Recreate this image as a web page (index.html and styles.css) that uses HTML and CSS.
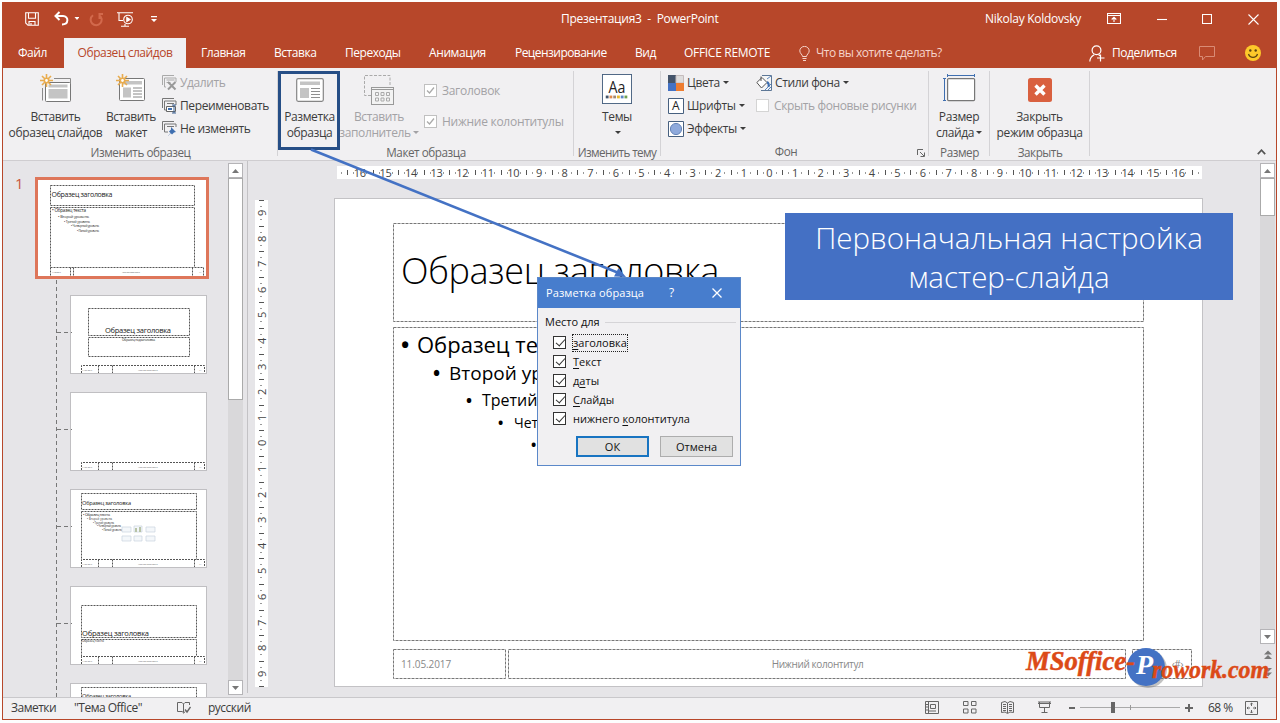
FILE: index.html
```html
<!DOCTYPE html>
<html lang="ru">
<head>
<meta charset="utf-8">
<title>Презентация3 - PowerPoint</title>
<link rel="stylesheet" href="styles.css">
</head>
<body>
<div class="window">
  <header class="top">
    <div class="titlebar">
      <div class="qat">
        <svg width="14" height="14" viewBox="0 0 14 14" class="ln w"><path d="M.7.7h12.6v12.6H3L.7 11zM3.5.7v5.5h7V.7M4 13.300V9.500h6v3.800M6 11v2"/></svg>
        <svg width="25" height="16" viewBox="0 0 25 16"><path d="M5.500 1 1.500 5l4 4M2 5h7c6 0 6 8.500-1 8.500" fill="none" stroke="#fff" stroke-width="2"/><path d="M20.500 6h5l-2.500 3z" fill="#fff"/></svg>
        <svg width="14" height="15" viewBox="0 0 14 15" class="redo"><path d="M4 3.200a5.500 5.500 0 1 0 6-.2M10.500 7V2H14" fill="none" stroke="#d2694c" stroke-width="2"/></svg>
        <svg width="17" height="15" viewBox="0 0 17 15" class="ln w show"><path d="M0 .8h16M2 1v7.500h4M8 12v2.300M4 14.300h8"/><circle cx="11" cy="7.500" r="4.300"/><path d="m9.800 5.500 3.200 2-3.200 2z" fill="#fff"/></svg>
        <svg width="6" height="7" viewBox="0 0 6 7" class="more"><path d="M0 0h6v1.300H0zM0 3h6L3 6z" fill="#fff"/></svg>
      </div>
      <div class="doc-title">Презентация3&nbsp; -&nbsp; PowerPoint</div>
      <div class="user">Nikolay Koldovsky</div>
      <div class="winbtns">
        <svg width="14" height="12" viewBox="0 0 14 12" class="ln w"><path d="M.5.5h13v10H.5zM.5 2.500h13M7 9V4.500M4.700 6.500 7 4.300l2.300 2.200"/></svg>
        <svg width="10" height="12" viewBox="0 0 10 12" class="ln w"><path d="M0 6.500h10"/></svg>
        <svg width="10" height="10" viewBox="0 0 10 10" class="ln w"><path d="M.5.5h9v9h-9z"/></svg>
        <svg width="11" height="11" viewBox="0 0 11 11" class="ln w"><path d="m.5.5 10 10M10.500.5l-10 10"/></svg>
      </div>
    </div>
    <nav class="tabs">
      <span class="tab file">Файл</span>
      <span class="tab active">Образец слайдов</span>
      <span class="tab t1">Главная</span>
      <span class="tab t2">Вставка</span>
      <span class="tab t3">Переходы</span>
      <span class="tab t4">Анимация</span>
      <span class="tab t5">Рецензирование</span>
      <span class="tab t6">Вид</span>
      <span class="tab t7">OFFICE REMOTE</span>
      <svg class="bulb" width="11" height="15" viewBox="0 0 11 15" fill="none" stroke="#f6d5cb"><path d="M3.500 10.500C3.500 8.500.8 7.500.8 4.900a4.600 4.400 0 0 1 9.400 0c0 2.600-2.700 3.600-2.700 5.600zM3.500 12.500h4M4 14.500h3"/></svg>
      <span class="tab tell">Что вы хотите сделать?</span>
      <svg class="person" width="16" height="17" viewBox="0 0 16 17" fill="none" stroke="#fff" stroke-width="1.200"><circle cx="7.500" cy="5.300" r="4.400"/><path d="M.8 16.500c.2-3.500 2-5.500 4.400-6.800M9.500 9.500l1.500 1.200M11.500 9.500v7M8 13h7.500"/></svg>
      <span class="tab share">Поделиться</span>
      <svg class="comment" width="16" height="15" viewBox="0 0 16 15" fill="none" stroke="#d98b75"><path d="M.5.5h15v10H6.500l-3 3.500v-3.500h-3z"/></svg>
      <svg class="smile" width="16" height="16" viewBox="0 0 16 16"><circle cx="8" cy="8" r="8" fill="#fdc92a"/><circle cx="5.300" cy="5.500" r="1.200" fill="#5b4310"/><circle cx="10.700" cy="5.500" r="1.200" fill="#5b4310"/><path d="M3.500 9c1.500 4.500 7.500 4.500 9 0" fill="none" stroke="#5b4310" stroke-width="1.300"/></svg>
    </nav>
  </header>

  <section class="ribbon">
    <div class="group g1">
      <div class="items">
        <div class="big b1">
          <svg width="32" height="30" viewBox="0 0 32 30"><path d="M14 4.500h16.500v17M2.500 14v12.500" fill="none" stroke="#8a8a8a"/><rect x="5.500" y="8.500" width="25" height="19" rx="1" fill="#fff" stroke="#777"/><rect x="8.500" y="10.500" width="19" height="3" fill="#c4c4c4"/><rect x="8.500" y="15" width="19" height="9.500" fill="#c4c4c4"/><g class="spark"><path d="M6.500 0v13M0 6.500h13M2 2l9 9M11 2l-9 9"/><circle cx="6.500" cy="6.500" r="2.200"/></g></svg>
          <span>Вставить<br>образец слайдов</span>
        </div>
        <div class="big b2">
          <svg width="30" height="30" viewBox="0 0 30 30"><rect x="3.500" y="4.500" width="25" height="22" rx="1" fill="#fff" stroke="#777"/><path d="M7 7h19v3.500H7zM7 13.500h8v10H7z" fill="#c4c4c4"/><path d="M17 14h9M17 17h9M17 20h9M17 23h9" stroke="#888"/><g class="spark"><path d="M6.500 0v13M0 6.500h13M2 2l9 9M11 2l-9 9"/><circle cx="6.500" cy="6.500" r="2.200"/></g></svg>
          <span>Вставить<br>макет</span>
        </div>
        <div class="rows r1">
          <div class="row off"><svg width="15" height="16" viewBox="0 0 15 16"><path d="M.5 10V.5h11.500M4 12H2.500V3H14v4M4.500 5h8M4.500 7.500h4" fill="none" stroke="#aaa"/><path d="m6 7 7.500 7.500M13.500 7 6 14.500" stroke="#999" stroke-width="2"/></svg><span>Удалить</span></div>
          <div class="row"><svg width="15" height="16" viewBox="0 0 15 16"><path d="M.5 10V.5h11.500M4 12H2.500V3H14v4M5 5.500h7" fill="none" stroke="#777"/><path d="M4.500 8.500h9v5h-9z" fill="#fff" stroke="#666"/><path d="M6 10h4v2H6z" fill="#3f6fb0"/><path d="M10 7h4M10 15h4M12 7v8" stroke="#3d6191"/></svg><span>Переименовать</span></div>
          <div class="row"><svg width="15" height="16" viewBox="0 0 15 16"><path d="M.5 9V.5h11.500M6 11H2.500V3H14v3M5 5.500h7" fill="none" stroke="#777"/><path d="m9 6 5 5-2 .5-2 2-1.200-1.200L6 15l2.500-3-1.500-1.500 2-2z" fill="#3f6fb0"/></svg><span>Не изменять</span></div>
        </div>
      </div>
      <div class="label">Изменить образец</div>
    </div>
    <div class="group g2">
      <div class="items">
        <div class="big b3">
          <svg width="28" height="30" viewBox="0 0 28 30"><rect x=".7" y="4.700" width="26.600" height="22.600" rx="1.500" fill="#fff" stroke="#858585" stroke-width="1.200"/><path d="M4 7.500h20v3.500H4zM4 14h9v10H4z" fill="#c4c4c4"/><path d="M15 14.500h9M15 17.500h9M15 20.500h9M15 23.500h9" stroke="#909090"/></svg>
          <span>Разметка<br>образца</span>
        </div>
        <div class="big b4 off">
          <svg width="32" height="30" viewBox="0 0 32 30" fill="none" stroke="#aaa"><path d="M27 11V1.500H1.500v20H8" stroke-dasharray="3 1.500"/><rect x="8.500" y="13.500" width="22" height="17" fill="#f3f3f3" stroke="#999"/><path d="M9 15.500h21" stroke="#999"/><path d="M12.500 18.500h3v3h-3zM18 18.500h3v3h-3zM23.500 18.500h3v3h-3zM12.500 24h3v3h-3zM18 24h3v3h-3zM23.500 24h3v3h-3z"/></svg>
          <span>Вставить<br>заполнитель<i class="dd"></i></span>
        </div>
        <div class="checks off">
          <div class="row"><svg class="cb" width="13" height="13" viewBox="0 0 13 13"><rect x=".5" y=".5" width="12" height="12" fill="#fff" stroke="#c0c0c0"/><path d="m3 6.500 2.500 2.500L10 3.500" fill="none" stroke="#aaa" stroke-width="1.300"/></svg><span>Заголовок</span></div>
          <div class="row"><svg class="cb" width="13" height="13" viewBox="0 0 13 13"><rect x=".5" y=".5" width="12" height="12" fill="#fff" stroke="#c0c0c0"/><path d="m3 6.500 2.500 2.500L10 3.500" fill="none" stroke="#aaa" stroke-width="1.300"/></svg><span>Нижние колонтитулы</span></div>
        </div>
      </div>
      <div class="label">Макет образца</div>
    </div>
    <div class="group g3">
      <div class="items">
        <div class="big b5">
          <svg width="32" height="32" viewBox="0 0 32 32"><rect x=".5" y=".5" width="31" height="31" fill="#fff" stroke="#47607f"/><text x="7" y="20" font-size="17" textLength="18" lengthAdjust="spacingAndGlyphs" fill="#222">Aa</text><path d="M4 23h3v3H4z" fill="#44546a"/><path d="M8 23h3v3H8z" fill="#e08a4c"/><path d="M12 23h3v3h-3z" fill="#a08a78"/><path d="M16 23h3v3h-3z" fill="#e8b92c"/><path d="M20 23h3v3h-3z" fill="#5b86c4"/><path d="M24 23h3v3h-3z" fill="#70a050"/></svg>
          <span>Темы<br><i class="dd"></i></span>
        </div>
      </div>
      <div class="label tight">Изменить тему</div>
    </div>
    <div class="group g4">
      <div class="items">
        <div class="rows r2">
          <div class="row"><svg width="16" height="16" viewBox="0 0 16 16"><path d="M0 0h8v8H0z" fill="#44546a"/><path d="M8 .5h7.500V8H8z" fill="#ddd" stroke="#c5bcbc"/><path d="M0 8h8v8H0z" fill="#4472c4"/><path d="M8 8h8v8H8z" fill="#ed7d31"/></svg><span>Цвета</span><i class="dd"></i></div>
          <div class="row"><svg width="16" height="16" viewBox="0 0 16 16"><path d="M.5.5h15v15H.5z" fill="#fff" stroke="#47607f"/><text x="4" y="12.200" font-size="12" fill="#222">A</text></svg><span>Шрифты</span><i class="dd"></i></div>
          <div class="row"><svg width="16" height="16" viewBox="0 0 16 16"><path d="M.5.5h15v15H.5z" fill="#fff" stroke="#47607f"/><circle cx="8" cy="8" r="5.600" fill="#8faadc" stroke="#6685b8"/></svg><span>Эффекты</span><i class="dd"></i></div>
        </div>
        <div class="rows r3">
          <div class="row"><svg width="16" height="16" viewBox="0 0 16 16"><path d="M6 .5h9.500v15H5" fill="#f6f6f6" stroke="#5d7796"/><path d="m9 15 6-6M12 15l3-3M11 4l4-3" stroke="#5b86bd"/><path d="M.8 7.500 6 2.500l5 5-5.500 5.500z" fill="#fff" stroke="#555"/><path d="M5 6V1.500" stroke="#555"/><path d="M11 7c2 1 2 3 1.500 5" fill="none" stroke="#3f6fb0" stroke-width="2"/></svg><span>Стили фона</span><i class="dd"></i></div>
          <div class="row off"><svg class="cb" width="13" height="13" viewBox="0 0 13 13"><rect x=".5" y=".5" width="12" height="12" fill="#fff" stroke="#d4d4d4"/></svg><span>Скрыть фоновые рисунки</span></div>
        </div>
      </div>
      <div class="label l4"><span>Фон</span><svg class="launch" width="8" height="8" viewBox="0 0 8 8" fill="none" stroke="#666"><path d="M.5 6V.5H6M3 3l4 4M7.500 3.500v4h-4"/></svg></div>
    </div>
    <div class="group g5">
      <div class="items">
        <div class="big b6">
          <svg width="32" height="30" viewBox="0 0 32 30"><path d="M4 1.500h28M4.500 0v3M31.500 0v3M1.500 4v23M0 4.500h3M0 26.500h3" stroke="#3f6fb0" fill="none"/><rect x="4.600" y="4.600" width="27" height="22" rx="1" fill="#fff" stroke="#777" stroke-width="1.200"/></svg>
          <span>Размер<br>слайда<i class="dd"></i></span>
        </div>
      </div>
      <div class="label">Размер</div>
    </div>
    <div class="group g6">
      <div class="items">
        <div class="big b7">
          <svg width="24" height="30" viewBox="0 0 24 30"><rect y="4" width="24" height="24" rx="2.500" fill="#d9603f"/><path d="m7.500 11.500 9 9M16.500 11.500l-9 9" stroke="#fff" stroke-width="3.400"/></svg>
          <span>Закрыть<br>режим образца</span>
        </div>
      </div>
      <div class="label">Закрыть</div>
    </div>
    <svg class="collapse" width="9" height="6" viewBox="0 0 9 6"><path d="m.8 5.200 3.700-4 3.700 4" fill="none" stroke="#555" stroke-width="1.700"/></svg>
  </section>

  <main class="work">
    <aside class="thumbs">
      <div class="num">1</div>
      <svg class="tree" width="16" height="418" viewBox="0 0 16 418"><path d="M.5 0v418M1 52.500h15M1 149.500h15M1 246.500h15M1 343.500h15" fill="none" stroke="#777" stroke-width="1" stroke-dasharray="4 3"/></svg>
      <div class="stack">
        <div class="thumb master">
          <svg width="168" height="96" viewBox="0 0 168 96">
            <g class="ph"><path d="M12.500 5.500h144v20h-144zM12.500 27.500h144v60M12.500 27.500v60M12.500 87.500h153v9M12.500 87.500v9M32.500 87.500v9M35.500 87.500v9M154.500 87.500v9"/></g>
            <text x="13.500" y="17" font-size="7" textLength="61">Образец заголовка</text>
            <text x="14" y="31.500" font-size="4.600" textLength="34">• Образец текста</text>
            <text x="20" y="37.500" font-size="3.900" textLength="31">• Второй уровень</text>
            <text x="26" y="43" font-size="3.300" textLength="26">• Третий уровень</text>
            <text x="33" y="47.300" font-size="3" textLength="28">• Четвертый уровень</text>
            <text x="39" y="52" font-size="3" textLength="22">• Пятый уровень</text>
            <g class="tiny"><text x="14" y="92.500" textLength="9">11.05.2017</text><text x="84" y="92.500" textLength="18">Нижний колонтитул</text><text x="161" y="92.500">‹#›</text></g>
          </svg>
        </div>
        <div class="thumb">
          <svg width="135" height="77" viewBox="0 0 135 77">
            <g class="ph"><path d="M17.500 12.500h101v27h-101zM17.500 41.500h101v19h-101z"/><path d="M10.500 77v-7.500h123V77M27.500 69.500V77M41.500 69.500V77M123.500 69.500V77"/></g>
            <text x="34" y="37" font-size="7.500" textLength="66">Образец заголовка</text>
            <text x="51" y="44.500" font-size="3.300" textLength="33">Образец подзаголовка</text>
            <g class="tiny"><text x="11" y="74.500">11.05.2017</text><text x="67" y="74.500">Нижний колонтитул</text><text x="128" y="74.500">‹#›</text></g>
          </svg>
        </div>
        <div class="thumb">
          <svg width="135" height="77" viewBox="0 0 135 77">
            <g class="ph"><path d="M10.500 77v-7.500h123V77M27.500 69.500V77M41.500 69.500V77M123.500 69.500V77"/></g>
            <g class="tiny"><text x="11" y="74.500">11.05.2017</text><text x="67" y="74.500">Нижний колонтитул</text><text x="128" y="74.500">‹#›</text></g>
          </svg>
        </div>
        <div class="thumb">
          <svg width="135" height="77" viewBox="0 0 135 77">
            <g class="ph"><path d="M10.500 3.500h115v16h-115zM10.500 21.500h115v48M10.500 21.500v48"/><path d="M10.500 77v-7.500h123V77M27.500 69.500V77M41.500 69.500V77M123.500 69.500V77"/></g>
            <text x="11" y="14.500" font-size="5.600" textLength="49">Образец заголовка</text>
            <text x="12" y="25.700" font-size="3.800" textLength="27">• Образец текста</text>
            <text x="16" y="30.300" font-size="2.600" textLength="25">• Второй уровень</text>
            <text x="22" y="33.800" font-size="2.600" textLength="21">• Третий уровень</text>
            <text x="26" y="37.300" font-size="2.600" textLength="24">• Четвертый уровень</text>
            <text x="31" y="40.800" font-size="2.600" textLength="20">• Пятый уровень</text>
            <g fill="#f4f7fa" stroke="#c9d3de" stroke-width=".7"><path d="M51 37h9v5h-9zM63 36h8v6h-8zM75 37h9v5h-9zM51 46h9v5h-9zM63 46h8v5h-8zM75 46h9v5h-9z"/></g>
            <path d="M64 38h2v4h-2zM68 37h2v5h-2z" fill="#b7c3a6"/>
            <g class="tiny"><text x="11" y="74.500">11.05.2017</text><text x="67" y="74.500">Нижний колонтитул</text><text x="128" y="74.500">‹#›</text></g>
          </svg>
        </div>
        <div class="thumb">
          <svg width="135" height="77" viewBox="0 0 135 77">
            <g class="ph"><path d="M10.500 18.500h115v32h-115zM10.500 52.500h115v17M10.500 52.500v17"/><path d="M10.500 77v-7.500h123V77M27.500 69.500V77M41.500 69.500V77M123.500 69.500V77"/></g>
            <text x="11" y="49" font-size="7.500" textLength="67">Образец заголовка</text>
            <text x="11" y="55.300" font-size="3" textLength="22">Образец текста</text>
            <g class="tiny"><text x="11" y="74.500">11.05.2017</text><text x="67" y="74.500">Нижний колонтитул</text><text x="128" y="74.500">‹#›</text></g>
          </svg>
        </div>
        <div class="thumb">
          <svg width="135" height="77" viewBox="0 0 135 77">
            <g class="ph"><path d="M10.500 3.500h115v16h-115z"/></g>
            <text x="11" y="14" font-size="5.600" textLength="49">Образец заголовка</text>
          </svg>
        </div>
      </div>
    </aside>
    <div class="scroll left-scroll">
      <div class="sbtn"><svg width="7" height="4" viewBox="0 0 7 4"><path d="M0 4h7L3.500 0z" fill="#777"/></svg></div>
      <div class="handle"></div>
      <div class="track"></div>
      <div class="sbtn"><svg width="7" height="4" viewBox="0 0 7 4"><path d="M0 0h7L3.500 4z" fill="#777"/></svg></div>
    </div>
    <div class="vruler-col">
      <div class="vruler"><span>9</span><span>8</span><span>7</span><span>6</span><span>5</span><span>4</span><span>3</span><span>2</span><span>1</span><span>0</span><span>1</span><span>2</span><span>3</span><span>4</span><span>5</span><span>6</span><span>7</span><span>8</span><span>9</span></div>
    </div>
    <div class="editor">
      <div class="hruler"><span>16</span><span>15</span><span>14</span><span>13</span><span>12</span><span>11</span><span>10</span><span>9</span><span>8</span><span>7</span><span>6</span><span>5</span><span>4</span><span>3</span><span>2</span><span>1</span><span>0</span><span>1</span><span>2</span><span>3</span><span>4</span><span>5</span><span>6</span><span>7</span><span>8</span><span>9</span><span>10</span><span>11</span><span>12</span><span>13</span><span>14</span><span>15</span><span>16</span></div>
      <div class="slide">
        <svg class="frames" width="867" height="488" viewBox="0 0 867 488"><path d="M58.500 24.500h750v98h-750zM58.500 128.500h750v313h-750zM58.500 450.500h112v29h-112zM173.500 450.500h617v29h-617zM797.500 450.500h59v29h-59z"/></svg>
        <div class="slide-title">Образец заголовка</div>
        <ul class="levels">
          <li class="v1"><b>•</b><span>Образец текста</span></li>
          <li class="v2"><b>•</b><span>Второй уровень</span></li>
          <li class="v3"><b>•</b><span>Третий уровень</span></li>
          <li class="v4"><b>•</b><span>Четвертый уровень</span></li>
          <li class="v5"><b>•</b><span>Пятый уровень</span></li>
        </ul>
        <div class="foot"><span class="date">11.05.2017</span><span class="mid">Нижний колонтитул</span><span class="no">‹#›</span></div>
      </div>
    </div>
    <div class="scroll right-scroll">
      <div class="sbtn"><svg width="7" height="4" viewBox="0 0 7 4"><path d="M0 4h7L3.500 0z" fill="#777"/></svg></div>
      <div class="handle"></div>
      <div class="track"></div>
      <div class="sbtn"><svg width="7" height="4" viewBox="0 0 7 4"><path d="M0 0h7L3.500 4z" fill="#777"/></svg></div>
      <svg class="pager" width="8" height="28" viewBox="0 0 8 28"><path d="M0 4.500 4 .5l4 4zM0 9l4-4 4 4zM0 18l4 4 4-4zM0 22.500l4 4 4-4z" fill="#777"/></svg>
    </div>
  </main>

  <footer class="status">
    <span class="notes">Заметки</span>
    <span class="theme">"Тема Office"</span>
    <svg class="spell" width="14" height="12" viewBox="0 0 14 12" fill="none" stroke="#666"><path d="M6.500 10.500V2L5 .5H.5v9H5zM6.500 2 8 .5h4.500V3M6.500 11.500 8 9.500"/><path d="m8 7.500 2 2.500 3.500-5" stroke-width="1.400"/></svg>
    <span class="lang">русский</span>
    <div class="views">
      <svg width="14" height="13" viewBox="0 0 14 13" fill="none" stroke="#666"><path d="M.5.5h13v12H.5zM3.500.5v12M5.500 3.500h5v4h-5zM4 10h7M1 3.500h2M1 6h2M1 9h2"/></svg>
      <svg width="14" height="13" viewBox="0 0 14 13" fill="none" stroke="#666"><path d="M.5.5H5v4H.5zM8.500.5H13v4H8.500zM.5 8H5v4H.5zM8.500 8H13v4H8.500z"/></svg>
      <svg width="13" height="13" viewBox="0 0 13 13" fill="none" stroke="#666"><path d="M.5 1.500 4 .5l2.500 1.500L9 .5l3.500 1v10l-3.500-.5-2.500 1.500L4 11l-3.500.5zM6.500 2v10M2 3.500h3M2 5.500h3M2 7.500h3M2 9.500h3M8 3.500h3M8 5.500h3M8 7.500h3M8 9.500h3"/></svg>
      <svg width="13" height="13" viewBox="0 0 13 13" fill="none" stroke="#666"><path d="M0 1h13M1.500 1v5.500h10V1M6.500 6.500V12M3.500 11.500h6M0 2.500h13"/></svg>
      <i class="minus"></i>
      <div class="slider"><i class="knob"></i><i class="mark"></i></div>
      <i class="plus"></i>
    </div>
    <span class="pct">68 %</span>
    <svg class="fit" width="13" height="14" viewBox="0 0 13 14" fill="none" stroke="#666"><path d="M.5.5h12v13H.5zM6.500 2v3M6.500 9v3M2 7h3M8 7h3M5.300 3.200l1.200-1.200 1.200 1.200M5.300 10.800l1.200 1.200 1.200-1.200M3.200 5.800 2 7l1.200 1.200M9.800 5.800 11 7l-1.200 1.200"/></svg>
  </footer>
</div>

<div class="highlight"></div>
<svg class="arrow" width="320" height="132" viewBox="0 0 320 132"><path d="M3 1.500 312 125.500" stroke="#4472c4" stroke-width="2.600"/><path d="m318 129-12-.5 4.500-8.500z" fill="#4472c4"/></svg>

<div class="callout">Первоначальная настройка<br><span>мастер-слайда</span></div>

<div class="dialog">
  <div class="dlg-title"><span>Разметка образца</span><em>?</em><svg width="10" height="10" viewBox="0 0 10 10"><path d="m.5.500 9 9M9.500.5l-9 9" stroke="#fff" stroke-width="1.300"/></svg></div>
  <div class="legend"><span>Место для</span></div>
  <div class="opts">
    <label><i class="tick"></i><span class="focus"><u>з</u>аголовка</span></label>
    <label><i class="tick"></i><span><u>Т</u>екст</span></label>
    <label><i class="tick"></i><span>д<u>а</u>ты</span></label>
    <label><i class="tick"></i><span><u>С</u>лайды</span></label>
    <label><i class="tick"></i><span>нижнего <u>к</u>олонтитула</span></label>
  </div>
  <div class="buttons"><span class="btn ok">ОК</span><span class="btn">Отмена</span></div>
</div>

<svg class="logo" width="250" height="48" viewBox="0 0 250 48">
  <circle cx="126" cy="23" r="19" fill="#777" opacity=".45"/>
  <circle cx="124" cy="21" r="19" fill="#4472c4"/>
  <g fill="#dc4a17" stroke="#dc4a17" stroke-width=".5"><text x="4" y="24" font-size="27" textLength="109" lengthAdjust="spacingAndGlyphs">MSoffice-</text><text x="130" y="32" font-size="25" textLength="117" lengthAdjust="spacingAndGlyphs">rowork.com</text></g>
  <text x="114" y="28" font-size="28" fill="#fff">P</text>
</svg>
</body>
</html>
```
FILE: styles.css
```css
* { box-sizing: border-box; }
body { margin: 0; width: 1280px; height: 723px; overflow: hidden; background: #fdfdfd; position: relative; font: 12px/16px "Open Sans", "Noto Sans", sans-serif; color: #3c3c3c; }
svg { display: block; flex: none; }
svg text { font-family: "Open Sans", "Noto Sans", sans-serif; letter-spacing: 0; }
.ln { fill: none; stroke: #fff; stroke-width: 1.1; }
.window { margin: 2px 3px 0 2px; width: 1275px; height: 718px; border: 1px solid #b7472a; border-top: 0; background: #e6e5e8; display: flex; flex-direction: column; }

/* title bar and tabs */
.top { background: #b7472a; color: #fff; height: 66px; flex: none; margin: 0 -1px; padding: 0 1px; }
.titlebar { height: 34px; margin-bottom: 2px; display: flex; align-items: center; letter-spacing: -0.27px; }
.qat { display: flex; align-items: center; width: 558px; padding-left: 22px; }
.qat svg:nth-child(2) { margin-left: 15px; }
.redo { margin-left: 10px; }
.show { margin-left: 14px; }
.more { margin-left: 17px; }
.doc-title { width: 424px; white-space: nowrap; }
.user { width: 122px; white-space: nowrap; }
.winbtns { display: flex; align-items: center; gap: 35.5px; }
.tabs { display: flex; align-items: center; height: 30px; white-space: nowrap; letter-spacing: -0.45px; }
.tab { flex: none; }
.file { width: 61px; padding-left: 15px; }
.active { width: 122px; height: 30px; line-height: 30px; background: #f1f0f2; color: #b7472a; text-align: center; margin-right: 15px; }
.t1 { width: 73px; } .t2 { width: 71px; } .t3 { width: 84px; } .t4 { width: 86px; letter-spacing: -0.4px; }
.t5 { width: 120px; letter-spacing: -0.55px; } .t6 { width: 49px; } .t7 { width: 115px; letter-spacing: -0.3px; }
.bulb { margin-right: 6px; }
.tell { width: 273px; color: #f6d5cb; letter-spacing: -0.5px; }
.share { width: 87px; margin-left: 7px; }
.smile { margin-left: 30px; }

/* ribbon */
.ribbon { height: 93px; flex: none; background: #f1f0f2; border-bottom: 1px solid #cfcdd0; display: flex; position: relative; padding-top: 3px; white-space: nowrap; letter-spacing: -0.38px; }
.group { height: 85px; border-right: 1px solid #d4d3d6; display: flex; flex-direction: column; flex: none; }
.items { display: flex; height: 72px; }
.g1 { width: 275px; } .g2 { width: 296px; } .g3 { width: 87px; } .g4 { width: 268px; } .g5 { width: 61px; } .g6 { width: 100px; }
.big { display: flex; flex-direction: column; align-items: center; text-align: center; padding-top: 3px; }
.big svg { height: 30px; overflow: visible; }
.big span { margin-top: 5px; }
.b1 { width: 105px; } .b2 { width: 46px; } .b3 { width: 63px; } .b4 { width: 76px; }
.b5 { width: 86px; } .b6 { width: 60px; } .b7 { width: 99px; }
.spark { fill: #fff; stroke: #e9ac4e; stroke-width: 1.6; }
.rows { display: flex; flex-direction: column; }
.r1 { padding-left: 8px; } .r2 { padding-left: 7px; width: 95px; }
.row { display: flex; align-items: center; height: 23px; gap: 3px; }
.off { color: #a3a2a5; }
.checks { padding: 4px 0 0 7px; letter-spacing: -0.27px; }
.checks .row { height: 31px; gap: 5px; }
.r3 .cb { margin-right: 2px; }
.dd { display: inline-block; border: 3px solid transparent; border-top-color: currentColor; border-bottom: 0; width: 0; height: 0; margin-left: 2px; vertical-align: 3px; }
.row .dd { margin-left: 0; }
.label { height: 18px; margin-top: 1px; text-align: center; color: #666; line-height: 20px; font-size: 11.7px; letter-spacing: -0.45px; margin-left: 1px; }
.tight { letter-spacing: -0.6px; margin: 1px -2px 0; }
.l4 { position: relative; padding-right: 18px; }
.launch { position: absolute; right: 3px; top: 8px; }
.collapse { position: absolute; right: 10px; bottom: 5px; }

/* work area */
.work { height: 536px; flex: none; display: flex; background: #e6e5e8; }
.thumbs { width: 225px; height: 536px; overflow: hidden; position: relative; }
.num { position: absolute; left: 12px; top: 14px; font-size: 15px; color: #c9583c; }
.tree { position: absolute; left: 53px; top: 119px; }
.stack { padding: 16px 0 0 32px; }
.thumb { width: 137px; height: 79px; margin: 0 0 18px 35px; border: 1px solid #c0bfc2; background: #fff; overflow: hidden; }
.thumb.master { width: 174px; height: 102px; margin: 0 0 16px; border: 3px solid #de765a; }
.thumb text { fill: #222; }
.thumb .tiny text { font-size: 2px; fill: #555; }
.ph { fill: none; stroke: #555; stroke-width: 1; stroke-dasharray: 2 1; }
.scroll { width: 15px; display: flex; flex-direction: column; margin-top: 2px; flex: none; }
.sbtn { height: 15px; border: 1px solid #b5b4b7; background: #fff; display: flex; align-items: center; justify-content: center; flex: none; }
.handle { border: 1px solid #aaa; background: #fff; flex: none; }
.track { background: #d9d8da; flex: 1; }
.left-scroll { height: 532px; }
.left-scroll .handle { height: 222px; }
.vruler-col { width: 21px; flex: none; margin-left: 4px; border-left: 1px solid #c3c2c5; height: 532px; padding: 39px 0 0 7px; }
.vruler { width: 13px; height: 487px; display: flex; flex-direction: column; font-size: 11px; color: #444; background: repeating-linear-gradient(to bottom, #555 0 1px, transparent 1px 25.6px) 4px 0 / 5px 100% no-repeat, repeating-linear-gradient(to bottom, transparent 0 6px, #999 6px 7px, transparent 7px 19px, #999 19px 20px, transparent 20px 25.6px) 5px 0 / 2px 100% no-repeat, #fff; }
.vruler span { height: 25.6px; width: 13px; display: flex; align-items: center; justify-content: center; transform: rotate(-90deg); flex: none; }
.editor { width: 990px; padding: 5px 0 0 66px; flex: none; }
.hruler { width: 865px; height: 13px; margin-left: 3px; display: flex; padding-left: 10px; font-size: 11px; line-height: 13px; color: #444; background: linear-gradient(#999, #999) 4px 6px / 1px 2px no-repeat, repeating-linear-gradient(to right, #555 0 1px, transparent 1px 25.6px) 10px 4px / 100% 5px no-repeat, repeating-linear-gradient(to right, transparent 0 6px, #999 6px 7px, transparent 7px 19px, #999 19px 20px, transparent 20px 25.6px) 10px 6px / 100% 2px no-repeat, #fff; }
.hruler span { width: 25.6px; text-align: center; flex: none; letter-spacing: -0.3px; }
.slide { width: 869px; height: 489px; margin-top: 19px; border: 1px solid #c3c2c5; background: #fff; position: relative; }
.frames { position: absolute; left: 0; top: 0; fill: none; stroke: #777; stroke-dasharray: 3 1; }
.slide-title { position: absolute; left: 66px; top: 47px; font-size: 36px; line-height: 50px; font-weight: 330; letter-spacing: -0.35px; color: #000; white-space: nowrap; }
.levels { list-style: none; margin: 0; padding: 129px 0 0 66px; color: #000; white-space: nowrap; }
.levels li { display: flex; align-items: center; }
.levels b { font-weight: 700; width: 16px; flex: none; }
.v1 { font-size: 22px; height: 31px; }
.v2 { font-size: 19px; height: 28px; padding-left: 32px; }
.v3 { font-size: 16px; height: 25px; padding-left: 65px; }
.v4 { font-size: 14px; height: 22px; padding-left: 97px; }
.v5 { font-size: 14px; height: 21px; padding-left: 130px; }
.foot { position: absolute; left: 59px; top: 450px; width: 798px; display: flex; align-items: center; height: 29px; font-size: 10px; font-weight: 500; color: #888; letter-spacing: -0.4px; }
.date { width: 115px; padding-left: 7px; letter-spacing: -0.1px; } .mid { width: 617px; text-align: center; } .no { width: 66px; text-align: right; padding-right: 9px; }
.right-scroll { margin-left: 2px; height: 532px; }
.right-scroll .handle { height: 38px; }
.right-scroll .track { flex: none; height: 413px; }
.pager { margin: 6px 0 0 4px; }

/* status bar */
.status { height: 22px; background: #f1f0f2; border-top: 1px solid #c9c8cb; display: flex; align-items: center; padding: 0 0 2px 8px; flex: 1; letter-spacing: -0.5px; }
.notes { width: 63px; } .theme { width: 103px; } .lang { margin-left: 17px; width: 717px; }
.views { display: flex; align-items: center; width: 283px; }
.views svg { margin-right: 24px; }
.views svg:nth-of-type(4) { margin-right: 18px; }
.minus { width: 6px; height: 2px; background: #666; }
.slider { width: 100px; height: 11px; margin: 0 5px; position: relative; background: linear-gradient(#aaa, #aaa) 0 5px / 100% 1px no-repeat; }
.knob { position: absolute; left: 31px; top: 0; width: 4px; height: 11px; background: #666; }
.mark { position: absolute; left: 50px; top: 3px; width: 1px; height: 5px; background: #999; }
.plus { width: 8px; height: 8px; background: linear-gradient(#666, #666) 0 3px / 8px 2px no-repeat, linear-gradient(#666, #666) 3px 0 / 2px 8px no-repeat; }
.pct { width: 37px; }

/* annotations */
.highlight { position: absolute; left: 278px; top: 71px; width: 62px; height: 79px; border: 3px solid #264e86; }
.arrow { position: absolute; left: 308px; top: 148px; }
.callout { position: absolute; left: 785px; top: 213px; width: 448px; height: 87px; background: #4470c4; color: #fff; font-size: 29.5px; line-height: 39px; padding-top: 5px; text-align: center; font-weight: 310; white-space: nowrap; }

/* dialog */
.dialog { position: absolute; left: 537px; top: 277px; width: 204px; height: 189px; background: #f1f0f2; border: 1px solid #5b88c9; color: #111; font-size: 11px; white-space: nowrap; }
.dlg-title { height: 30px; background: #477dcd; color: #fff; display: flex; align-items: center; padding-left: 8px; }
.dlg-title span { width: 123px; letter-spacing: 0.1px; }
.dlg-title em { font-style: normal; width: 43px; font-size: 12px; }
.legend { display: flex; align-items: center; padding: 6px 4px 0 7px; gap: 5px; }
.legend::after { content: ""; flex: 1; height: 1px; background: #d5d4d7; }
.opts { padding: 3px 0 0 15px; }
.opts label { display: flex; align-items: center; height: 19px; gap: 7px; }
.tick { width: 13px; height: 13px; border: 1px solid #333; background: #fff; display: flex; }
.tick::before { content: ""; width: 8px; height: 4px; margin: 2px 0 0 2px; border: solid #333; border-width: 0 0 1.3px 1.3px; transform: rotate(-48deg); }
.opts u { text-underline-offset: 2px; }
.focus { outline: 1px dotted #222; outline-offset: 0; }
.buttons { display: flex; gap: 11px; padding: 8px 0 0 38px; }
.btn { width: 73px; height: 21px; border: 1px solid #adadad; background: #e1e1e1; text-align: center; line-height: 19px; }
.ok { border: 2px solid #1874c1; line-height: 17px; }

.logo { position: absolute; left: 1022px; top: 646px; overflow: visible; }
.logo text { font-family: cursive, "Liberation Serif", serif; font-style: italic; font-weight: 700; }
```
